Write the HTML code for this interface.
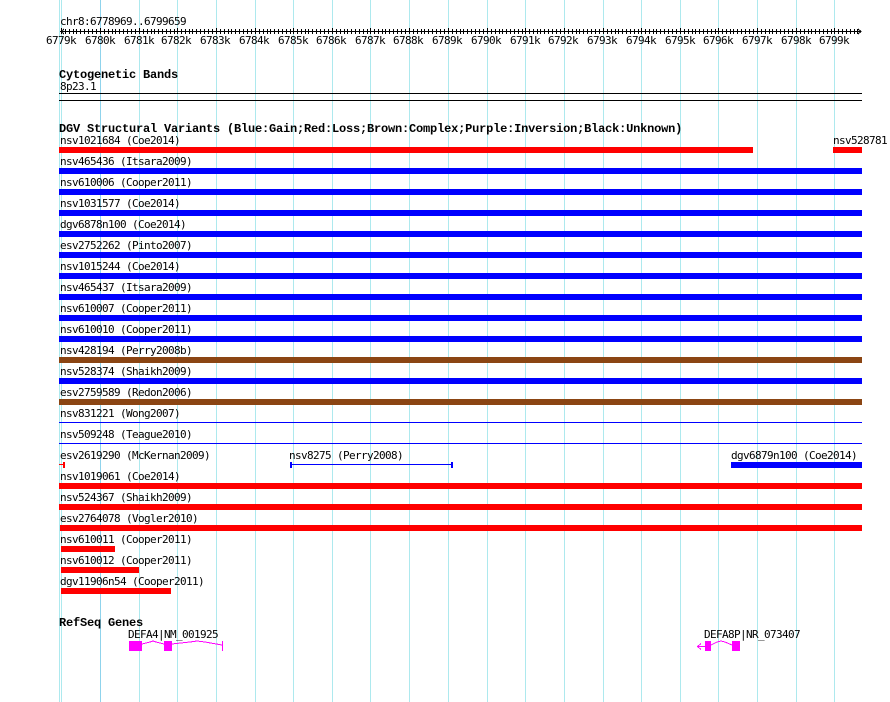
<!DOCTYPE html>
<html><head><meta charset="utf-8"><style>
html,body{margin:0;padding:0;background:#fff}
svg{display:block}
text{font-family:"DejaVu Sans Mono","Liberation Mono",monospace;font-size:11px;letter-spacing:-0.62px;fill:#000;white-space:pre}
.b{font-family:"Liberation Mono","DejaVu Sans Mono",monospace;font-weight:bold;font-size:12px;letter-spacing:-0.2px}
</style></head><body>
<svg xmlns="http://www.w3.org/2000/svg" width="890" height="702" viewBox="0 0 890 702">
<defs><path id="t" d="M0 28V34M4 29V34M8 29V34M12 29V34M15 29V34M19 29V34M23 29V34M27 29V34M31 29V34M35 29V34" stroke="#000" stroke-width="1" fill="none"/></defs>
<g fill="#ade9ee" shape-rendering="crispEdges">
<rect x="59" y="0" width="1" height="702"/><rect x="61" y="0" width="1" height="702"/><rect x="100" y="0" width="1" height="702" fill="#8fd3ec"/><rect x="139" y="0" width="1" height="702"/><rect x="177" y="0" width="1" height="702"/><rect x="216" y="0" width="1" height="702"/><rect x="255" y="0" width="1" height="702"/><rect x="293" y="0" width="1" height="702"/><rect x="332" y="0" width="1" height="702"/><rect x="370" y="0" width="1" height="702"/><rect x="409" y="0" width="1" height="702"/><rect x="448" y="0" width="1" height="702"/><rect x="487" y="0" width="1" height="702"/><rect x="525" y="0" width="1" height="702"/><rect x="564" y="0" width="1" height="702"/><rect x="603" y="0" width="1" height="702"/><rect x="641" y="0" width="1" height="702"/><rect x="680" y="0" width="1" height="702"/><rect x="718" y="0" width="1" height="702"/><rect x="757" y="0" width="1" height="702"/><rect x="796" y="0" width="1" height="702"/><rect x="834" y="0" width="1" height="702"/>
</g>
<g shape-rendering="crispEdges">
<rect x="60" y="31" width="801" height="1" fill="#000"/>
<g transform="translate(0.5 0)">
<use href="#t" x="61"/><use href="#t" x="100"/><use href="#t" x="139"/><use href="#t" x="177"/><use href="#t" x="216"/><use href="#t" x="255"/><use href="#t" x="293"/><use href="#t" x="332"/><use href="#t" x="370"/><use href="#t" x="409"/><use href="#t" x="448"/><use href="#t" x="487"/><use href="#t" x="525"/><use href="#t" x="564"/><use href="#t" x="603"/><use href="#t" x="641"/><use href="#t" x="680"/><use href="#t" x="718"/><use href="#t" x="757"/><use href="#t" x="796"/>
<path d="M834 28V34M838 29V34M842 29V34M846 29V34M850 29V34M854 29V34M857 29V34" stroke="#000" stroke-width="1" fill="none"/>
</g>
<rect x="59" y="93" width="803" height="1" fill="#000"/>
<rect x="59" y="100" width="803" height="1" fill="#000"/>
<g fill="#ff0000">
<rect x="59" y="147" width="694" height="6"/>
<rect x="833" y="147" width="29" height="6"/>
<rect x="59" y="483" width="803" height="6"/>
<rect x="59" y="504" width="803" height="6"/>
<rect x="60" y="525" width="802" height="6"/>
<rect x="61" y="546" width="54" height="6"/>
<rect x="61" y="567" width="78" height="6"/>
<rect x="61" y="588" width="110" height="6"/>
<rect x="59" y="464" width="5" height="1"/>
<rect x="63" y="462" width="2" height="6"/>
</g>
<g fill="#0000ff">
<rect x="59" y="168" width="803" height="6"/>
<rect x="59" y="189" width="803" height="6"/>
<rect x="59" y="210" width="803" height="6"/>
<rect x="59" y="231" width="803" height="6"/>
<rect x="59" y="252" width="803" height="6"/>
<rect x="59" y="273" width="803" height="6"/>
<rect x="59" y="294" width="803" height="6"/>
<rect x="59" y="315" width="803" height="6"/>
<rect x="59" y="336" width="803" height="6"/>
<rect x="59" y="378" width="803" height="6"/>
<rect x="59" y="422" width="803" height="1"/>
<rect x="59" y="443" width="803" height="1"/>
<rect x="290" y="464" width="163" height="1"/>
<rect x="290" y="462" width="2" height="6"/>
<rect x="451" y="462" width="2" height="6"/>
<rect x="731" y="462" width="131" height="6"/>
</g>
<g fill="#8b4513">
<rect x="59" y="357" width="803" height="6"/>
<rect x="59" y="399" width="803" height="6"/>
</g>
<g fill="#ff00ff">
<rect x="129" y="641" width="13" height="10"/>
<rect x="164" y="641" width="8" height="10"/>
<rect x="222" y="641" width="1" height="10"/>
<rect x="705" y="641" width="6" height="10"/>
<rect x="732" y="641" width="8" height="10"/>
<rect x="698" y="646" width="7" height="1"/>
</g>
<path d="M64 29L61 31.5L64 34M858 29L861 31.5L858 34" stroke="#000" fill="none"/>
<path d="M142 644L150 642L153 641L156 642L164 644M172 644L190 642L197 641L205 642L222 645M711 645L717 642L721 641L725 642L732 645M701 643.5L697.5 646.5L701 649.5" fill="none" stroke="#ff00ff" stroke-width="1"/>
</g>
<text x="60" y="25">chr8:6778969..6799659</text>
<g text-anchor="middle">
<text x="61" y="44">6779k</text><text x="100" y="44">6780k</text><text x="139" y="44">6781k</text><text x="176" y="44">6782k</text><text x="215" y="44">6783k</text><text x="254" y="44">6784k</text><text x="293" y="44">6785k</text><text x="331" y="44">6786k</text><text x="370" y="44">6787k</text><text x="408" y="44">6788k</text><text x="447" y="44">6789k</text><text x="486" y="44">6790k</text><text x="525" y="44">6791k</text><text x="563" y="44">6792k</text><text x="602" y="44">6793k</text><text x="641" y="44">6794k</text><text x="680" y="44">6795k</text><text x="718" y="44">6796k</text><text x="757" y="44">6797k</text><text x="796" y="44">6798k</text><text x="834" y="44">6799k</text>
</g>
<text class="b" x="59" y="78">Cytogenetic Bands</text>
<text x="60" y="90">8p23.1</text>
<text class="b" x="59" y="132">DGV Structural Variants (Blue:Gain;Red:Loss;Brown:Complex;Purple:Inversion;Black:Unknown)</text>
<text x="60" y="144">nsv1021684 (Coe2014)</text>
<text x="833" y="144">nsv528781</text>
<text x="60" y="165">nsv465436 (Itsara2009)</text>
<text x="60" y="186">nsv610006 (Cooper2011)</text>
<text x="60" y="207">nsv1031577 (Coe2014)</text>
<text x="60" y="228">dgv6878n100 (Coe2014)</text>
<text x="60" y="249">esv2752262 (Pinto2007)</text>
<text x="60" y="270">nsv1015244 (Coe2014)</text>
<text x="60" y="291">nsv465437 (Itsara2009)</text>
<text x="60" y="312">nsv610007 (Cooper2011)</text>
<text x="60" y="333">nsv610010 (Cooper2011)</text>
<text x="60" y="354">nsv428194 (Perry2008b)</text>
<text x="60" y="375">nsv528374 (Shaikh2009)</text>
<text x="60" y="396">esv2759589 (Redon2006)</text>
<text x="60" y="417">nsv831221 (Wong2007)</text>
<text x="60" y="438">nsv509248 (Teague2010)</text>
<text x="60" y="459">esv2619290 (McKernan2009)</text>
<text x="289" y="459">nsv8275 (Perry2008)</text>
<text x="731" y="459">dgv6879n100 (Coe2014)</text>
<text x="60" y="480">nsv1019061 (Coe2014)</text>
<text x="60" y="501">nsv524367 (Shaikh2009)</text>
<text x="60" y="522">esv2764078 (Vogler2010)</text>
<text x="60" y="543">nsv610011 (Cooper2011)</text>
<text x="60" y="564">nsv610012 (Cooper2011)</text>
<text x="60" y="585">dgv11906n54 (Cooper2011)</text>
<text class="b" x="59" y="626">RefSeq Genes</text>
<text x="128" y="638">DEFA4|NM_001925</text>
<text x="704" y="638">DEFA8P|NR_073407</text>
</svg>
</body></html>
